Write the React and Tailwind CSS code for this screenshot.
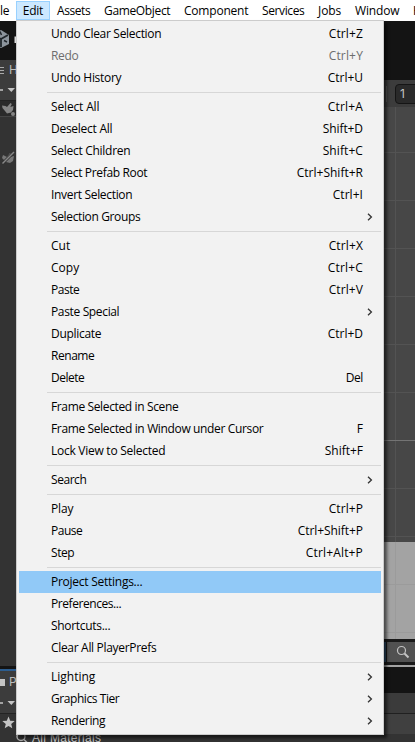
import { useLayoutEffect, useRef } from "react";

const groups = [
  [
    ["Undo Clear Selection", 110, "Ctrl+Z", 34],
    ["Redo", 27, "Ctrl+Y", 34, "disabled"],
    ["Undo History", 70, "Ctrl+U", 35],
  ],
  [
    ["Select All", 48, "Ctrl+A", 35],
    ["Deselect All", 61, "Shift+D", 40],
    ["Select Children", 79, "Shift+C", 40],
    ["Select Prefab Root", 96, "Ctrl+Shift+R", 66],
    ["Invert Selection", 81, "Ctrl+I", 30],
    ["Selection Groups", 89, ">"],
  ],
  [
    ["Cut", 19, "Ctrl+X", 34],
    ["Copy", 28, "Ctrl+C", 35],
    ["Paste", 28, "Ctrl+V", 34],
    ["Paste Special", 68, ">"],
    ["Duplicate", 50, "Ctrl+D", 35],
    ["Rename", 43],
    ["Delete", 33, "Del", 17],
  ],
  [
    ["Frame Selected in Scene", 127],
    ["Frame Selected in Window under Cursor", 212, "F", 6],
    ["Lock View to Selected", 114, "Shift+F", 38],
  ],
  [["Search", 35, ">"]],
  [
    ["Play", 22, "Ctrl+P", 34],
    ["Pause", 31, "Ctrl+Shift+P", 65],
    ["Step", 23, "Ctrl+Alt+P", 57],
  ],
  [
    ["Project Settings...", 91, "", 0, "active"],
    ["Preferences...", 70],
    ["Shortcuts...", 59],
    ["Clear All PlayerPrefs", 105],
  ],
  [
    ["Lighting", 44, ">"],
    ["Graphics Tier", 68, ">"],
    ["Rendering", 54, ">"],
  ],
];

// Spreads the letters of a label so that it fills the given width.
function Fit({ text, width }) {
  const ref = useRef(null);
  useLayoutEffect(() => {
    const el = ref.current;
    el.style.letterSpacing = "0px";
    const natural = el.getBoundingClientRect().width;
    el.style.letterSpacing = (width + 0.3 - natural) / text.length + "px";
  }, [text, width]);
  return (
    <span ref={ref} className="inline-block whitespace-nowrap">
      {text}
    </span>
  );
}

function Chevron() {
  return (
    <svg width="6" height="8" viewBox="0 0 6 8" className="mr-2 shrink-0" fill="none" stroke="#333" strokeWidth="1.3">
      <path d="M1 .8 4.4 4 1 7.2" />
    </svg>
  );
}

function Row({ item }) {
  const [label, width, key, keyWidth, state] = item;
  return (
    <div
      className={
        "flex h-[22px] items-center justify-between pl-8 " +
        (state === "active" ? "bg-[#91c9f7] " : "") +
        (state === "disabled" ? "text-[#6d6d6d]" : "text-black")
      }
    >
      <Fit text={label} width={width} />
      {key === ">" ? (
        <Chevron />
      ) : key ? (
        <span className="mr-[18px] flex">
          <Fit text={key} width={keyWidth} />
        </span>
      ) : null}
    </div>
  );
}

function EditMenu() {
  return (
    <div className="absolute top-5 left-4 h-[715px] w-[368px] border border-[#ccc] bg-[#f2f2f2] p-0.5 shadow-[3px_3px_3px_rgba(0,0,0,0.55)]">
      {groups.map((group, i) => (
        <div key={i}>
          {i > 0 && (
            <div className="flex h-[7px] items-center">
              <div className="ml-7 h-px grow bg-[#d7d7d7]" />
            </div>
          )}
          {group.map((item) => (
            <Row key={item[0]} item={item} />
          ))}
        </div>
      ))}
    </div>
  );
}

const bar = [
  ["Assets", 33, "w-[47px]"],
  ["GameObject", 66, "w-20"],
  ["Component", 64, "w-[78px]"],
  ["Services", 42, "w-14"],
  ["Jobs", 23, "w-[37px]"],
  ["Window", 44, "w-[58px]"],
];

function MenuBar() {
  return (
    <div className="flex h-[21px] shrink-0 items-center overflow-hidden bg-white text-black">
      <div className="w-4 shrink-0">
        <Fit text="le" width={9} />
      </div>
      <div className="mr-[7px] flex h-[19px] w-[34px] shrink-0 items-center justify-center border border-[#99d1ff] bg-[#cce8ff]">
        <Fit text="Edit" width={20} />
      </div>
      {bar.map(([label, width, box]) => (
        <div key={label} className={"shrink-0 " + box}>
          <Fit text={label} width={width} />
        </div>
      ))}
      <div className="shrink-0">
        <Fit text="Help" width={24} />
      </div>
    </div>
  );
}

function AddButton() {
  return (
    <svg width="16" height="10" viewBox="0 0 16 10" fill="#c4c4c4">
      <path d="M0 4.3h3v1.5H0zM7.5 3h7.5L11.3 7z" />
    </svg>
  );
}

function LeftPanels() {
  return (
    <div className="flex w-[200px] flex-col bg-[#333] text-[#bdbdbd]">
      <div className="flex h-[39px] shrink-0 items-center bg-[#141414]">
        <svg width="16" height="20" viewBox="0 0 16 20" className="-mt-1">
          <path d="M-7 5 1 1l8 5v9l-8 4-8-4z" fill="#8c949c" />
          <path d="M1 10 8 6M1 10v8M1 10-6 6" stroke="#20262b" strokeWidth="1.8" />
          <path d="M0 2.5 1.5 6M7 13l-3-1.5" stroke="#20262b" strokeWidth="1.5" />
          <path d="M14.5 7.5V14h1.5V7.5z" fill="#ddd" />
        </svg>
      </div>
      <div className="flex h-5 shrink-0 items-center gap-[5px] bg-[#3c3c3c] text-[12px]">
        <svg width="4" height="9" viewBox="0 0 4 9" stroke="#aaa">
          <path d="M0 1.5h4M0 4.5h4M0 7.5h4" />
        </svg>
        <span className="font-['Inter',sans-serif]">H</span>
      </div>
      <div className="flex h-[21px] shrink-0 items-center border-b border-[#232323] bg-[#3c3c3c]">
        <AddButton />
      </div>
      <div className="flex h-4 shrink-0 items-center border-b border-[#454545] bg-[#2a2a2a]">
        <svg width="16" height="15" viewBox="0 0 16 15" fill="#858585">
          <path d="M2 4.5 5.5 5 7 6l3.5-4 1.3 1-1.5 3 3.2-1-.5 4-2 2.5-4 1L5 10 2.5 7z" />
          <circle cx="13" cy="13" r="2" />
        </svg>
      </div>
      <div className="h-[549px] shrink-0 pt-[33px]">
        <svg width="16" height="16" viewBox="0 0 16 16" fill="#777">
          <path d="M3 5 5 6l2 1 3-4 1 1-1 3 4-1-1 5-3 2-4-1-4-4z" />
          <path d="M2 14 14 2" stroke="#333" strokeWidth="3" />
          <path d="M2.5 13.5 14 2" stroke="#888" strokeWidth="1.4" />
        </svg>
      </div>
      <div className="h-[5px] shrink-0 border-t-[3px] border-b-2 border-t-[#141414] border-b-[#2c5d8f] bg-[#2c5d8f]" />
      <div className="flex h-[22px] shrink-0 items-center gap-1 bg-[#3c3c3c] text-[12px]">
        <div className="h-[7px] w-[5px] bg-[#c4c4c4]" />
        <span className="font-['Inter',sans-serif]">P</span>
      </div>
      <div className="flex h-[21px] shrink-0 items-center border-b border-[#232323] bg-[#3c3c3c]">
        <AddButton />
      </div>
      <div className="flex h-4 shrink-0 items-center pl-0.5">
        <svg width="13" height="13" viewBox="0 0 13 13" fill="#c4c4c4">
          <path d="m6.5.5 1.7 4.2 4.5.3-3.5 2.9 1.1 4.4-3.8-2.4-3.8 2.4 1.1-4.4L.3 5l4.5-.3z" />
        </svg>
      </div>
      <div className="flex h-4 shrink-0 items-center gap-1 pl-4 font-['Liberation_Sans',Arial,sans-serif] text-[12px] text-[#c4c4c4]">
        <svg width="12" height="12" viewBox="0 0 12 12" fill="none" stroke="#aaa" strokeWidth="1.5">
          <circle cx="5" cy="4.5" r="4" />
          <path d="m8 7.500 3 3" />
        </svg>
        <Fit text="All Materials" width={69} />
      </div>
    </div>
  );
}

function SceneView() {
  return (
    <svg width="215" height="560" viewBox="0 0 215 560" className="shrink-0">
      <rect width="215" height="560" fill="#474747" />
      <path d="M0 45.500h215M0 93.500h215M0 141.500h215M0 189.500h215M0 237.500h215M0 285.500h215M0 381.500h215M0 429.500h215M195.500 0v435" stroke="#535353" />
      <path d="M0 333.500h215" stroke="#747474" />
      <rect y="435" width="215" height="125" fill="#a3a3a3" />
      <path d="M0 477.500h215M0 525.500h215M195.500 435v97" stroke="#9b9b9b" />
      <rect y="532" width="215" height="26" fill="#191919" />
      <rect y="535" width="186" height="20" fill="#2c4a66" />
      <rect x="187" y="535" width="28" height="20" fill="#515151" />
      <g fill="none" stroke="#c4c4c4" strokeWidth="1.2">
        <circle cx="201.500" cy="543.500" r="4" />
        <path d="m204.500 546.500 4 4" strokeWidth="2" />
      </g>
    </svg>
  );
}

function RightPanels() {
  return (
    <div className="flex w-[215px] flex-col bg-[#333]">
      <div className="h-[59px] shrink-0 bg-[#141414]" />
      <div className="flex h-[27px] shrink-0 items-center justify-end bg-[#3c3c3c] font-['Inter',sans-serif] text-[12px] text-[#c4c4c4]">
        <div className="mr-2 h-4 w-px bg-[#555]" />
        <div className="-mr-1 flex h-5 w-6 items-center rounded border border-[#151515] bg-[#2a2a2a] pl-1">1</div>
      </div>
      <SceneView />
      <div className="h-[26px] shrink-0 bg-[#141414]" />
      <div className="h-[21px] shrink-0 border-b border-[#202020] bg-[#3b3b3b]" />
      <div className="h-5 shrink-0 bg-[#404040]" />
      <div className="grow" />
    </div>
  );
}

export default function App() {
  return (
    <div className="relative flex h-[742px] w-[415px] flex-col overflow-hidden font-['Open_Sans','Noto_Sans',sans-serif] text-[12px] leading-none">
      <MenuBar />
      <div className="flex min-h-0 grow">
        <LeftPanels />
        <RightPanels />
      </div>
      <EditMenu />
    </div>
  );
}
